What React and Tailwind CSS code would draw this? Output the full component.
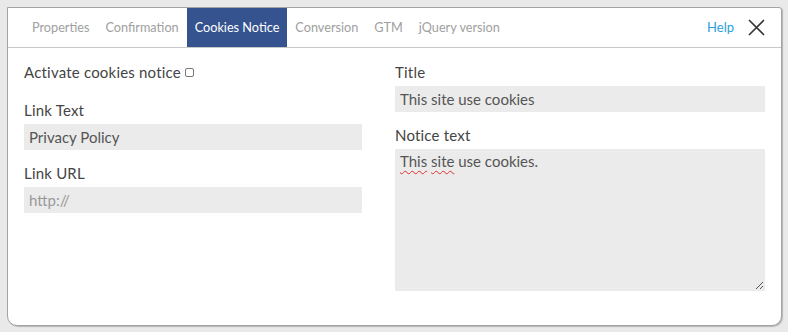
import React from "react";

const tabs = ["Properties", "Confirmation", "Cookies Notice", "Conversion", "GTM", "jQuery version"];

function Field({ label, children, className = "" }) {
  return (
    <div className={className}>
      <div className="text-[15px] leading-[20px] tracking-[0.2px] text-[#444] mb-1">{label}</div>
      {children}
    </div>
  );
}

export default function App() {
  return (
    <div
      className="w-[788px] h-[332px] bg-[#e9e9e9] pl-[7px] pt-[7px]"
      style={{ fontFamily: "Lato, 'Open Sans', sans-serif" }}
    >
      <div className="w-[775px] h-[319px] bg-white border border-[#a3a3a3] rounded-tr-[3px] rounded-b-[10px] shadow-[1px_1px_1px_#b5b5b5] flex flex-col overflow-hidden">
        {/* tab bar */}
        <div className="h-[40px] border-b border-[#c8c8c8] flex items-stretch pl-4 pr-4">
          {tabs.map((t) => (
            <div
              key={t}
              className={
                t === "Cookies Notice"
                  ? "px-2 flex items-center text-[12.7px] bg-[#35538f] text-white"
                  : "px-2 flex items-center text-[12.7px] text-[#a0a0a0]"
              }
            >
              {t}
            </div>
          ))}
          <div className="ml-auto flex items-center gap-[14px]">
            <span className="text-[13px] text-[#2b9fd8]">Help</span>
            <svg width="17" height="17" viewBox="0 0 17 17">
              <path d="M1 1L16 16M16 1L1 16" stroke="#333" strokeWidth="1.6" fill="none" />
            </svg>
          </div>
        </div>

        {/* content */}
        <div className="flex pt-[14px] pl-4 gap-[33px]">
          <div className="w-[338px] flex flex-col">
            <div className="text-[15px] leading-[20px] tracking-[0.2px] text-[#444] flex items-center gap-[4px]">
              Activate cookies notice
              <span className="inline-block w-[9px] h-[9px] border border-[#777] rounded-[2px] bg-white" />
            </div>
            <Field label="Link Text" className="mt-[18px]">
              <div className="h-[26px] bg-[#ebebeb] pl-[5px] flex items-center text-[15px] text-[#555]">
                Privacy Policy
              </div>
            </Field>
            <Field label="Link URL" className="mt-[13px]">
              <div className="h-[26px] bg-[#ebebeb] pl-[5px] flex items-center text-[15px] text-[#999]">
                http://
              </div>
            </Field>
          </div>

          <div className="w-[370px] flex flex-col">
            <Field label="Title">
              <div className="h-[26px] bg-[#ebebeb] pl-[5px] flex items-center text-[15px] text-[#555]">
                This site use cookies
              </div>
            </Field>
            <Field label="Notice text" className="mt-[13px]">
              <div className="h-[142px] bg-[#ebebeb] pl-[5px] pt-[2px] flex flex-col text-[15px] text-[#555]">
                <div className="leading-[20px]">
                  <span className="underline decoration-wavy decoration-[#e03030] decoration-1 underline-offset-[3px]">This</span>{" "}
                  <span className="underline decoration-wavy decoration-[#e03030] decoration-1 underline-offset-[3px]">site</span>{" "}
                  use cookies.
                </div>
                <svg width="9" height="9" viewBox="0 0 9 9" className="mt-auto self-end mb-[1px] mr-[1px]">
                  <path d="M8 1L1 8M8 5L5 8" stroke="#555" strokeWidth="1" fill="none" />
                </svg>
              </div>
            </Field>
          </div>
        </div>
      </div>
    </div>
  );
}
